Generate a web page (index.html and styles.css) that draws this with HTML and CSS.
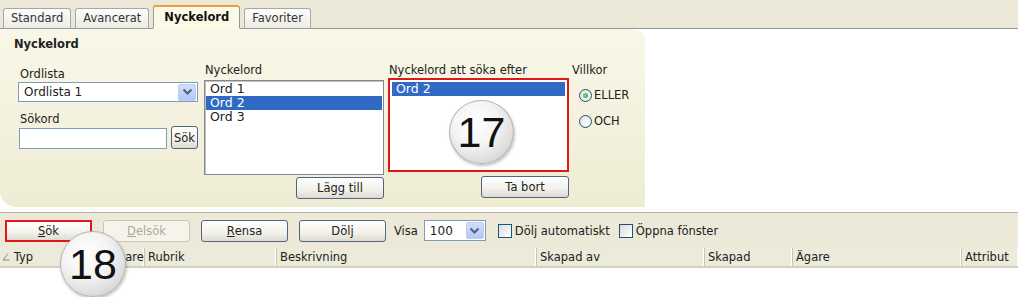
FILE: index.html
```html
<!DOCTYPE html>
<html lang="sv">
<head>
    <meta charset="UTF-8">
    <title>Nyckelord</title>
    <link rel="stylesheet" href="styles.css">
</head>
<body>
    <div class="tabs">
        <div class="tab">Standard</div>
        <div class="tab">Avancerat</div>
        <div class="tab active">Nyckelord</div>
        <div class="tab">Favoriter</div>
    </div>

    <div class="main">
        <div class="panel">
            <div class="panel-title">Nyckelord</div>
            <div class="panel-cols">
                <div class="col col-lists">
                    <div class="label">Ordlista</div>
                    <div class="select select-wide">
                        <span class="select-value">Ordlista 1</span>
                        <span class="select-drop">
                            <svg width="11" height="8" viewBox="0 0 11 8"><polyline points="1.5,1.5 5.5,5.5 9.5,1.5" fill="none" stroke="#4d6185" stroke-width="2"/></svg>
                        </span>
                    </div>
                    <div class="label label-search">Sökord</div>
                    <div class="search-row">
                        <div class="input"></div>
                        <div class="btn btn-small">Sök</div>
                    </div>
                </div>

                <div class="col col-words">
                    <div class="label">Nyckelord</div>
                    <ul class="listbox">
                        <li>Ord 1</li>
                        <li class="sel">Ord 2</li>
                        <li>Ord 3</li>
                    </ul>
                    <div class="btn-row"><div class="btn btn-add">Lägg till</div></div>
                </div>

                <div class="col col-chosen">
                    <div class="label">Nyckelord att söka efter</div>
                    <ul class="listbox marked">
                        <li class="sel">Ord 2</li>
                    </ul>
                    <div class="btn-row"><div class="btn btn-remove">Ta bort</div></div>
                </div>

                <div class="col col-cond">
                    <div class="label">Villkor</div>
                    <div class="radio-row first"><span class="radio on"></span>ELLER</div>
                    <div class="radio-row"><span class="radio"></span>OCH</div>
                </div>
            </div>
        </div>
    </div>

    <div class="toolbar">
        <div class="btn btn-tool marked-btn"><u>S</u>ök</div>
        <div class="btn btn-tool disabled"><u>D</u>elsök</div>
        <div class="btn btn-tool"><u>R</u>ensa</div>
        <div class="btn btn-tool">Dölj</div>
        <span class="visa">Visa</span>
        <div class="select select-small">
            <span class="select-value">100</span>
            <span class="select-drop">
                <svg width="11" height="8" viewBox="0 0 11 8"><polyline points="1.5,1.5 5.5,5.5 9.5,1.5" fill="none" stroke="#4d6185" stroke-width="2"/></svg>
            </span>
        </div>
        <label class="check"><span class="box"></span>Dölj automatiskt</label>
        <label class="check"><span class="box"></span>Öppna fönster</label>
    </div>

    <div class="grid-head">
        <div class="th th-typ">
            <svg width="8" height="8" viewBox="0 0 8 8"><polyline points="6,0.5 1,7 7.5,7" fill="none" stroke="#8a8a80" stroke-width="1"/></svg>
            Typ
        </div>
        <div class="th th-owner1">Ägare</div>
        <div class="th th-title">Rubrik</div>
        <div class="th th-desc">Beskrivning</div>
        <div class="th th-by">Skapad av</div>
        <div class="th th-created">Skapad</div>
        <div class="th th-owner2">Ägare</div>
        <div class="th th-attr">Attribut</div>
    </div>

    <div class="callout c17">17</div>
    <div class="callout c18">18</div>
</body>
</html>
```

FILE: styles.css
```css
* {
    margin: 0;
    padding: 0;
    box-sizing: border-box;
}
body {
    width: 1018px;
    height: 297px;
    overflow: hidden;
    position: relative;
    background: #fff;
    font-family: 'DejaVu Sans', sans-serif;
    font-size: 11.5px;
    color: #222;
}
ul {
    list-style: none;
}

/* tabs */
.tabs {
    height: 29px;
    display: flex;
    align-items: flex-end;
    gap: 4px;
    padding-left: 3px;
    background: #ebe8d7;
    border-bottom: 1px solid #919b9c;
}
.tab {
    height: 21px;
    line-height: 19px;
    padding: 0 7px;
    margin-bottom: -1px;
    border: 1px solid #a3a9aa;
    border-bottom: 1px solid #919b9c;
    border-radius: 3px 3px 0 0;
    background: linear-gradient(#fdfdfb, #ecebe4);
    color: #333;
}
.tab.active {
    height: 24px;
    line-height: 20px;
    padding: 0 10px;
    font-weight: bold;
    color: #111;
    background: #fbfae6;
    border-color: #919b9c;
    border-top: 2px solid #ec9c3c;
    border-bottom: 1px solid #fbfae6;
    position: relative;
    z-index: 2;
}

/* keyword panel */
.main {
    display: flex;
    height: 178px;
}
.panel {
    width: 645px;
    padding: 8px 0 0 14px;
    background: linear-gradient(#f9f8e8, #efecd4);
    border-radius: 0 12px 0 16px;
}
.panel-title {
    font-weight: bold;
    line-height: 14px;
    color: #222;
}
.panel-cols {
    display: flex;
    margin-top: 12px;
    padding-left: 4px;
}
.label {
    line-height: 14px;
    padding-left: 1px;
}
.col-lists {
    width: 181px;
    margin-top: 4px;
}
.col-lists .label {
    padding-left: 2px;
}
.col-words {
    width: 180px;
    margin-left: 5px;
}
.col-chosen {
    width: 181px;
    margin-left: 4px;
}
.col-cond {
    margin-left: 2px;
}

.select {
    display: flex;
    align-items: center;
    justify-content: space-between;
    height: 20px;
    margin-top: 1px;
    padding: 1px 1px 1px 5px;
    background: #fff;
    border: 1px solid #7f9db9;
    font-size: 12px;
}
.select-wide {
    width: 180px;
}
.select-drop {
    width: 18px;
    height: 17px;
    display: flex;
    align-items: center;
    justify-content: center;
    background: linear-gradient(#d2defb, #b4c8f5);
    border: 1px solid #b9cdf8;
    border-radius: 2px;
}
.label-search {
    margin-top: 10px;
}
.search-row {
    display: flex;
    align-items: flex-end;
    gap: 4px;
}
.input {
    width: 148px;
    height: 21px;
    margin-left: 1px;
    background: #fff;
    border: 1px solid #7f9db9;
}

.listbox {
    height: 95px;
    margin-top: 3px;
    padding: 1px;
    background: #fff;
    border: 1px solid #828790;
    box-shadow: inset 1px 1px 0 #c2c2c2;
}
.listbox li {
    line-height: 14px;
    padding-left: 4px;
    font-size: 12.5px;
    color: #222;
}
.listbox li.sel {
    background: #316ac5;
    color: #fff;
}
.listbox.marked {
    height: 94px;
    margin-top: 1px;
    padding: 2px;
    border: 2px solid #e01818;
    box-shadow: none;
}
.btn-row {
    display: flex;
    justify-content: flex-end;
    margin-top: 2px;
}
.col-chosen .btn-row {
    margin-top: 4px;
}

.btn {
    height: 22px;
    display: flex;
    align-items: center;
    justify-content: center;
    color: #222;
    background: linear-gradient(#ffffff, #f2f1ea 60%, #dcdad0);
    border: 1px solid #4f6580;
    border-radius: 3px;
}
.btn-small {
    width: 27px;
    height: 23px;
}
.btn-add {
    width: 88px;
}
.btn-remove {
    width: 88px;
}

.radio-row {
    display: flex;
    align-items: center;
    gap: 2px;
    height: 14px;
    padding-left: 8px;
    margin-top: 12px;
}
.radio-row.first {
    margin-top: 11px;
}
.radio {
    width: 13px;
    height: 13px;
    border-radius: 50%;
    border: 1px solid #1c5180;
    background: radial-gradient(circle at 60% 60%, #fff, #dcdcd6);
    display: flex;
    align-items: center;
    justify-content: center;
}
.radio.on::after {
    content: '';
    width: 5px;
    height: 5px;
    border-radius: 50%;
    background: radial-gradient(circle at 40% 40%, #7be07b, #21a121);
}

/* toolbar */
.toolbar {
    height: 36px;
    margin-top: 5px;
    display: flex;
    align-items: center;
    padding-left: 5px;
    background: #ece9d8;
    border-top: 1px solid #b5b2a1;
}
.btn-tool {
    width: 87px;
    margin-right: 11px;
}
.btn.marked-btn {
    border: 2px solid #e01818;
    border-radius: 0;
}
.btn.disabled {
    color: #aca899;
    border-color: #c9c7ba;
    background: #f5f4ea;
}
.visa {
    margin-left: -3px;
    margin-right: 6px;
}
.select-small {
    width: 62px;
    height: 21px;
    margin-top: 0;
}
.check {
    display: flex;
    align-items: center;
    gap: 3px;
    margin-left: 12px;
}
.check + .check {
    margin-left: 9px;
}
.box {
    width: 14px;
    height: 14px;
    border: 1px solid #1c5180;
    background: linear-gradient(135deg, #dcdcd7, #fff);
}

/* list header */
.grid-head {
    height: 20px;
    display: flex;
    background: #ebeadb;
    border-bottom: 2px solid #d3d0bd;
}
.th {
    line-height: 18px;
    padding-left: 3px;
    border-right: 1px solid #c7c5b2;
    box-shadow: inset -1px 0 0 #fff;
    white-space: nowrap;
    overflow: hidden;
}
.th-typ {
    width: 107px;
    padding-left: 2px;
}
.th-owner1 { width: 38px; }
.th-title { width: 132px; }
.th-desc { width: 260px; }
.th-by { width: 168px; }
.th-created { width: 88px; }
.th-owner2 { width: 169px; }
.th-attr {
    flex: 1;
    border-right: none;
}

/* numbered callouts */
.callout {
    position: absolute;
    width: 65px;
    height: 64px;
    border-radius: 50%;
    display: flex;
    align-items: center;
    justify-content: center;
    font-family: 'Liberation Sans', sans-serif;
    font-size: 43px;
    color: #111;
    background: radial-gradient(circle at 40% 35%, #ffffff 0%, #f4f4f4 40%, #d6d6d6 80%, #bdbdbd 100%);
    border: 1px solid #b3b3b3;
    box-shadow: 1px 2px 3px rgba(0, 0, 0, 0.25);
    z-index: 5;
}
.c17 {
    left: 449px;
    top: 100px;
}
.c18 {
    left: 60px;
    top: 231px;
    width: 66px;
    height: 66px;
}
```
